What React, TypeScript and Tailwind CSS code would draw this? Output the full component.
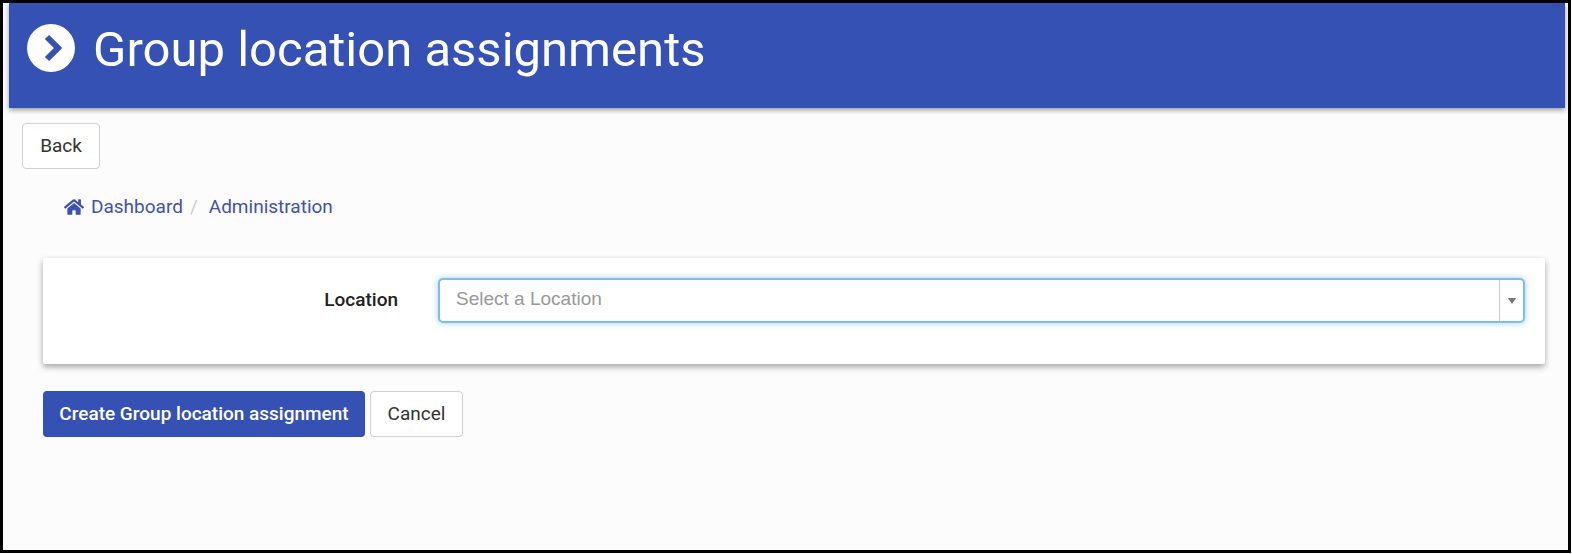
function HomeIcon() {
  return (
    <svg viewBox="0 0 576 512" className="w-[20px] h-[18px] fill-[#3f51b5] shrink-0">
      <path d="M280.4 148.3 96 300.1V464a16 16 0 0 0 16 16l112.100-.3a16 16 0 0 0 15.900-16V368a16 16 0 0 1 16-16h64a16 16 0 0 1 16 16v95.600a16 16 0 0 0 16 16.100L464 480a16 16 0 0 0 16-16V300L295.700 148.300a12.200 12.200 0 0 0-15.300 0zM571.600 251.500 488 182.600V44a12 12 0 0 0-12-12h-56a12 12 0 0 0-12 12v72.600L318.500 43a48 48 0 0 0-61 0L4.300 251.500a12 12 0 0 0-1.600 16.900l25.500 31A12 12 0 0 0 45.200 301l235.200-193.700a12.200 12.200 0 0 1 15.300 0L530.900 301a12 12 0 0 0 16.900-1.600l25.500-31a12 12 0 0 0-1.700-16.900z" />
    </svg>
  );
}

export default function App() {
  return (
    <div className="w-[1572px] h-[554px] bg-white font-['Roboto',sans-serif]">
      <div className="w-[1571px] h-[553px] border-[3px] border-black bg-[#fcfcfc] flex flex-col overflow-hidden">
        <header className="ml-[6px] mr-[3px] h-[105px] shrink-0 bg-[#3551b4] shadow-[0_2px_5px_rgba(0,0,0,0.4)] flex items-center pl-[18px] pb-[12px]">
          <svg viewBox="0 0 48 48" className="w-[48px] h-[48px] shrink-0 mb-[4px]">
            <circle cx="24" cy="24" r="24" fill="#fff" />
            <path d="M20 13 31 24 20 35" fill="none" stroke="#3551b4" strokeWidth="6" />
          </svg>
          <h1 className="ml-[18px] text-[49px] leading-none text-white">Group location assignments</h1>
        </header>

        <div className="pl-[19px] pt-[15px]">
          <button className="w-[78px] h-[46px] bg-white border border-[#d0d0d0] rounded-[4px] text-[19px] text-[#333]">
            Back
          </button>
        </div>

        <nav className="ml-[61px] mt-[26px] h-[24px] flex items-center text-[19px] text-[#3f51b5]">
          <HomeIcon />
          <span className="ml-[7px]">Dashboard</span>
          <span className="ml-[7px] text-[#ccc]">/</span>
          <span className="ml-[11px]">Administration</span>
        </nav>

        <section className="ml-[40px] mr-[23px] mt-[39px] h-[106px] shrink-0 bg-white rounded-[2px] shadow-[0_3px_6px_rgba(0,0,0,0.35)] flex items-start pt-[20px]">
          <label className="w-[355px] pt-[8px] text-right text-[19px] font-medium text-[#222]">Location</label>
          <div className="ml-[40px] w-[1087px] h-[45px] bg-white border-2 border-[#7dbcf0] rounded-[5px] shadow-[0_0_6px_rgba(102,175,233,0.6)] flex items-stretch">
            <div className="flex-1 pl-[16px] pt-[5px] font-['Liberation_Sans',sans-serif] text-[19px] text-[#999]">
              Select a Location
            </div>
            <div className="w-[24px] border-l border-[#ccc] flex items-center justify-center">
              <svg viewBox="0 0 8 6" className="w-[8px] h-[6px] fill-[#777]">
                <path d="M0 0h8L4 6z" />
              </svg>
            </div>
          </div>
        </section>

        <div className="ml-[40px] mt-[27px] flex gap-[5px]">
          <button className="w-[322px] h-[46px] bg-[#3551b4] rounded-[4px] text-[19px] font-medium text-white">
            Create Group location assignment
          </button>
          <button className="w-[93px] h-[46px] bg-white border border-[#d0d0d0] rounded-[4px] text-[19px] text-[#333]">
            Cancel
          </button>
        </div>
      </div>
    </div>
  );
}
